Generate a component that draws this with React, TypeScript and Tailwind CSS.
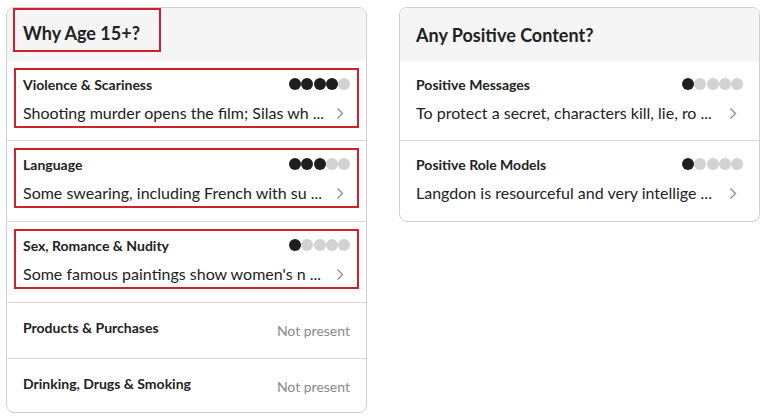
import React from 'react';

interface Rated { title: string; level: number; text: string; flagged?: boolean; }

const ageRows: Rated[] = [
  { title: 'Violence & Scariness', level: 4, text: 'Shooting murder opens the film; Silas wh', flagged: true },
  { title: 'Language', level: 3, text: 'Some swearing, including French with su', flagged: true },
  { title: 'Sex, Romance & Nudity', level: 1, text: "Some famous paintings show women's n", flagged: true },
];

const positiveRows: Rated[] = [
  { title: 'Positive Messages', level: 1, text: 'To protect a secret, characters kill, lie, ro' },
  { title: 'Positive Role Models', level: 1, text: 'Langdon is resourceful and very intellige' },
];

function Dots({ level }: { level: number }) {
  return (
    <div className="flex gap-[0.25px]">
      {[0, 1, 2, 3, 4].map(i => (
        <span key={i} className={i < level ? 'w-3 h-3 rounded-full bg-[#1f1f1f]' : 'w-3 h-3 rounded-full bg-[#d2d2d2]'} />
      ))}
    </div>
  );
}

function Chevron() {
  return (
    <svg width="8" height="13" viewBox="0 0 8 13" className="ml-auto mr-[6px] shrink-0">
      <path d="M1.5 1.5 L6.5 6.5 L1.5 11.5" fill="none" stroke="#8a8a8a" strokeWidth="1.3" />
    </svg>
  );
}

function RatedRow({ row, first }: { row: Rated; first?: boolean }) {
  return (
    <div className={`${first ? 'pt-[7px] pb-[12px]' : 'border-t border-[#d6d6d6] pt-[7px] pb-[13px]'} px-[7px]`}>
      <div className={`border-2 px-[7px] pt-[5px] pb-[2px] ${row.flagged ? 'border-[#d0202e]' : 'border-transparent'}`}>
        <div className="flex items-center justify-between h-[18px]">
          <span className="text-[14px] font-bold text-[#222]">{row.title}</span>
          <Dots level={row.level} />
        </div>
        <div className="flex items-center mt-[9px] h-[22px]">
          <span className="whitespace-nowrap text-[16px] text-[#222]">{row.text} ...</span>
          <Chevron />
        </div>
      </div>
    </div>
  );
}

function AbsentRow({ title, last }: { title: string; last?: boolean }) {
  return (
    <div className={`border-t border-[#d6d6d6] flex items-start justify-between px-4 pt-[16px] ${last ? 'pb-[15px]' : 'pb-[17px]'}`}>
      <span className="text-[14px] leading-[18px] font-bold text-[#222]">{title}</span>
      <span className="text-[14px] leading-[21px] mt-[1px] text-[#8a8a8a]">Not present</span>
    </div>
  );
}

export default function App() {
  return (
    <div className="w-[763px] h-[416px] bg-white flex items-start gap-[32px] pl-[6px] pt-[7px]" style={{ fontFamily: 'Lato, "Open Sans", sans-serif' }}>
      {/* Why age */}
      <div className="w-[361px] border border-[#d0d0d0] rounded-lg overflow-hidden">
        <div className="bg-[#f5f5f5] h-[53px] px-[6px]">
          <div className="inline-flex items-center h-[44px] border-2 border-[#d0202e] pl-[8px] pr-[19px] pt-[6px]">
            <span className="text-[18px] font-bold text-[#222]">Why Age 15+?</span>
          </div>
        </div>
        <RatedRow row={ageRows[0]} first />
        <RatedRow row={ageRows[1]} />
        <RatedRow row={ageRows[2]} />
        <AbsentRow title="Products & Purchases" />
        <AbsentRow title="Drinking, Drugs & Smoking" last />
      </div>

      {/* Positive */}
      <div className="w-[361px] border border-[#d0d0d0] rounded-lg overflow-hidden">
        <div className="bg-[#f5f5f5] h-[53px] flex items-center px-4 pt-[1px]">
          <span className="text-[18px] font-bold text-[#222]">Any Positive Content?</span>
        </div>
        <RatedRow row={positiveRows[0]} first />
        <RatedRow row={positiveRows[1]} />
      </div>
    </div>
  );
}
